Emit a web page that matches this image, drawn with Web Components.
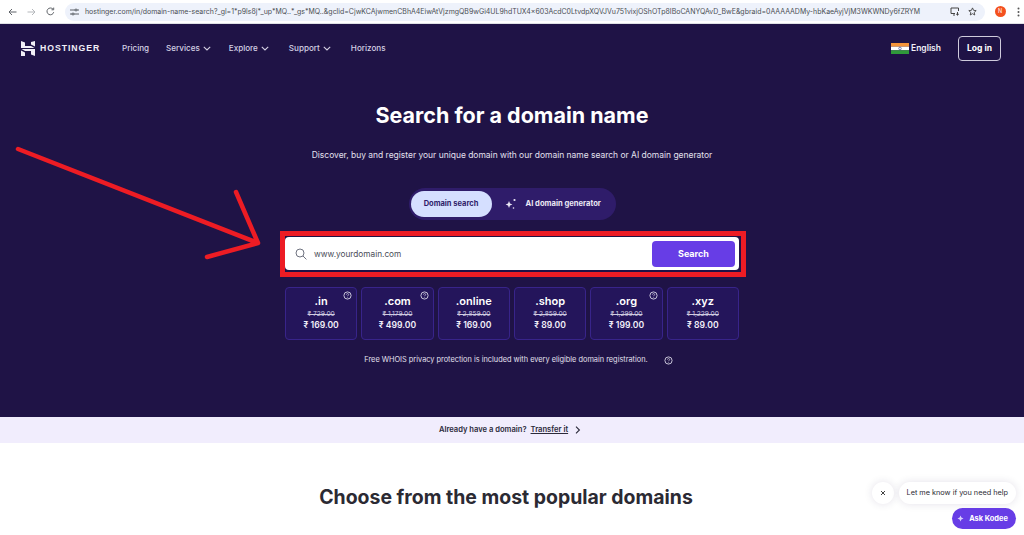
<!DOCTYPE html>
<html><head><meta charset="utf-8"><title>Hostinger</title>
<style>
html,body{margin:0;padding:0;background:#fff;height:535px;overflow:hidden;font-family:Inter,"Liberation Sans",sans-serif}
</style></head><body>
<browser-bar></browser-bar>
<site-hero>
  <site-nav></site-nav>
  <domain-finder></domain-finder>
</site-hero>
<transfer-strip></transfer-strip>
<popular-section></popular-section>
<chat-widget></chat-widget>
<red-arrow></red-arrow>
<script>
function def(name,html){customElements.define(name,class extends HTMLElement{constructor(){super();this.attachShadow({mode:'open'}).innerHTML=html;}});}
const help=(s=9,c='#d9d6e6')=>`<svg width="${s}" height="${s}" viewBox="0 0 10 10" fill="none" stroke="${c}" stroke-width="1"><circle cx="5" cy="5" r="4"/><path d="M3.8 4c0-1.5 2.5-1.5 2.5 0 0 .9-1.3.9-1.3 1.8" stroke-width=".8"/><circle cx="5" cy="7.4" r=".3" stroke-width=".5"/></svg>`;
const chev=`<svg width="8" height="5" viewBox="0 0 8 5" fill="none" stroke="#d5d1e4" stroke-width="1.1"><path d="M.8.8 4 3.9 7.2.8"/></svg>`;

def('browser-bar',`<style>
:host{display:flex;align-items:center;height:24px;background:#fff;box-sizing:border-box;border-bottom:1px solid #dfe1e5;padding-left:7px;color:#5f6368}
.ic{display:flex;width:10px;justify-content:center;margin-right:9px}
.omni{flex:none;width:920px;height:18px;margin:0 0 0 1px;background:#eef2fb;border-radius:9px;display:flex;align-items:center;box-sizing:border-box;padding:0 8px 0 5px}
.url{flex:1;white-space:nowrap;overflow:hidden;font:6.97px/17px Inter,"Liberation Sans",sans-serif;color:#4a4e53;margin-left:6px;width:0}
.av{width:11px;height:11px;border-radius:50%;background:#f4511e;color:#fff;font:5.5px/11px Inter,sans-serif;text-align:center;margin-left:9.5px}
.dots{margin-left:11.5px}
</style>
<span class="ic"><svg width="9" height="8" viewBox="0 0 9 8" fill="none" stroke="#5f6368" stroke-width="1"><path d="M8.5 4H1M4 1 1 4l3 3"/></svg></span>
<span class="ic"><svg width="9" height="8" viewBox="0 0 9 8" fill="none" stroke="#b4b7bb" stroke-width="1"><path d="M.5 4H8M5 1l3 3-3 3"/></svg></span>
<span class="ic"><svg width="9" height="9" viewBox="0 0 9 9" fill="none" stroke="#5f6368" stroke-width="1"><path d="M7.7 5.2A3.4 3.4 0 1 1 7 2.2"/><path d="M7.7.6v2.2H5.5" /></svg></span>
<div class="omni">
<svg width="9" height="8" viewBox="0 0 9 8" fill="none" stroke="#4a4f55" stroke-width=".9"><path d="M0 2h5M7 2h2M0 6h2M4 6h5"/><circle cx="6" cy="2" r="1"/><circle cx="3" cy="6" r="1"/></svg>
<span class="url">hostinger.com/in/domain-name-search?_gl=1*p9ls8j*_up*MQ..*_gs*MQ..&amp;gclid=CjwKCAjwmenCBhA4EiwAtVjzmgQB9wGi4UL9hdTUX4x603AcdC0LtvdpXQVJVu751vixjOShOTp8IBoCANYQAvD_BwE&amp;gbraid=0AAAAADMy-hbKaeAyjVjM3WKWNDy6fZRYM</span>
<svg width="10" height="9" viewBox="0 0 10 9" fill="none" stroke="#444" stroke-width="1"><path d="M8.5 4V1H1v5.5h4M3 8h2"/><path d="M7.5 5v3M6.2 7l1.3 1.2L8.8 7"/></svg>
<svg style="margin-left:8.5px" width="9" height="9" viewBox="0 0 10 10" fill="none" stroke="#444" stroke-width="1"><path d="m5 1 1.2 2.7 2.9.3-2.2 2 .6 2.9L5 7.4 2.5 8.9l.6-2.9-2.2-2 2.9-.3z"/></svg>
</div>
<span class="av">N</span>
<svg class="dots" width="3" height="10" viewBox="0 0 3 10" fill="#555"><circle cx="1.5" cy="1.5" r="1"/><circle cx="1.5" cy="5" r="1"/><circle cx="1.5" cy="8.5" r="1"/></svg>`);

def('site-hero',`<style>:host{display:block;height:393px;background:#1f1346;box-sizing:border-box}</style><slot></slot>`);

def('site-nav',`<style>
:host{display:flex;align-items:center;height:48px;box-sizing:border-box;padding:0 23px 0 21px;color:#d5d1e4;font:500 8.1px/12px Inter,"Liberation Sans",sans-serif}
.logo{display:flex;align-items:center;gap:5px;width:101px;color:#f1eff7;font:700 8.7px/12px "Liberation Sans",sans-serif;letter-spacing:.95px}
a{display:flex;align-items:center;gap:3px}
.links{display:flex;gap:19px}
.links a:nth-child(1){margin-right:-2px}
.links a:nth-child(2){margin-right:-1px}
.links a:nth-child(3),.links a:nth-child(4){margin-right:1px}
.sp{flex:1}
.lang{display:flex;align-items:center;gap:2px;color:#f1eff7;font-weight:600;font-size:8.5px;margin-right:17px}
.btn{width:43px;height:25px;box-sizing:border-box;border:1px solid #cfcbdc;border-radius:4px;display:flex;align-items:center;justify-content:center;color:#fff;font-weight:700;font-size:8.5px}
</style>
<div class="logo"><svg width="14" height="15" viewBox="0 0 14 15" fill="#f1eff7"><path d="M0 0 4 1.6V5H10L13.5 7H0zM10 1 14 0V5.6L10 3.6zM.5 8H14V15L10 13.4V10H4zM0 9.6 4 11.6V15H0z"/></svg>HOSTINGER</div>
<div class="links"><a>Pricing</a><a>Services ${chev}</a><a>Explore ${chev}</a><a>Support ${chev}</a><a>Horizons</a></div>
<span class="sp"></span>
<div class="lang"><svg width="18" height="11" viewBox="0 0 18 11"><rect width="18" height="3.7" fill="#f4943a"/><rect y="3.7" width="18" height="3.6" fill="#fff"/><rect y="7.3" width="18" height="3.7" fill="#2f9a3a"/><circle cx="9" cy="5.5" r="1.3" fill="none" stroke="#2a3a8c" stroke-width=".6"/></svg>English</div>
<div class="btn">Log in</div>`);

def('domain-finder',`<style>
:host{display:flex;flex-direction:column;align-items:center;font-family:Inter,"Liberation Sans",sans-serif;color:#fff;padding-top:29px}
h1{margin:0;font:700 21.5px/28px Inter,"Liberation Sans",sans-serif;height:28px}
p.s{margin:20px 0 0;font:400 8.46px/12px Inter,"Liberation Sans",sans-serif;color:#e3e0ee;height:12px}
.toggle{margin-top:27px;width:207px;height:32px;box-sizing:border-box;border-radius:16px;background:#2f1c6a;padding:3px 2px;display:flex;align-items:stretch}
.on{width:81px;border-radius:13px;background:#d5dfff;color:#2f1c6a;font:700 7.5px/26px Inter,sans-serif;text-align:center}
.off{display:flex;align-items:center;color:#ebe8f5;font:700 7.6px/26px Inter,sans-serif;padding-left:12px;gap:9px}
.box{margin-top:17px;width:454px;height:33px;box-sizing:border-box;background:#fff;border-radius:4px;display:flex;align-items:center;padding:0 4px 0 10px;color:#4a4d58;font:400 8.25px Inter,sans-serif;flex:none}
.box span{flex:1;margin-left:7px}
.go{width:83px;height:26px;border-radius:4px;background:#673de6;color:#fff;font:700 9px/26px Inter,sans-serif;text-align:center}
.cards{margin-top:17px;display:flex;gap:4px;width:454px}
.note{margin:14px 0 0 13px;display:flex;align-items:center;gap:16px;font:400 7.37px/12px Inter,sans-serif;color:#e3e0ee;height:12px}
</style>
<h1>Search for a domain name</h1>
<p class="s">Discover, buy and register your unique domain with our domain name search or AI domain generator</p>
<div class="toggle"><div class="on">Domain search</div><div class="off"><svg width="13" height="12" viewBox="0 0 13 12" fill="#ebe8f5"><path d="M5 3l1 2.4L8.4 6.4 6 7.4 5 10 4 7.4 1.6 6.4 4 5.4z"/><circle cx="10.5" cy="2" r="1.1"/><circle cx="9.5" cy="10" r=".8"/></svg>AI domain generator</div></div>
<div class="box"><svg width="12" height="12" viewBox="0 0 12 12" fill="none" stroke="#6f7380" stroke-width="1"><circle cx="5" cy="5" r="4"/><path d="M8 8l3.4 3.4"/></svg><span>www.yourdomain.com</span><div class="go">Search</div></div>
<div class="cards">
<tld-card name=".in" old="₹ 729.00" now="₹ 169.00" tip></tld-card>
<tld-card name=".com" old="₹ 1,179.00" now="₹ 499.00" tip></tld-card>
<tld-card name=".online" old="₹ 2,859.00" now="₹ 169.00"></tld-card>
<tld-card name=".shop" old="₹ 2,859.00" now="₹ 89.00"></tld-card>
<tld-card name=".org" old="₹ 1,299.00" now="₹ 199.00" tip></tld-card>
<tld-card name=".xyz" old="₹ 1,229.00" now="₹ 89.00"></tld-card>
</div>
<div class="note">Free WHOIS privacy protection is included with every eligible domain registration. ${help(9)}</div>`);

customElements.define('tld-card',class extends HTMLElement{constructor(){super();this.attachShadow({mode:'open'});}
connectedCallback(){const g=a=>this.getAttribute(a);this.shadowRoot.innerHTML=`<style>
:host{flex:1;height:53px;box-sizing:border-box;display:flex;flex-direction:column;align-items:center;background:#24155b;border:1px solid #38248a;border-radius:4px;position:relative;color:#fff;padding-top:6px}
.n{font:600 11px/14px Inter,sans-serif}
.o{font:400 6.6px/10px Inter,sans-serif;text-decoration:line-through;color:#d0cce0;margin-top:1px}
.p{font:600 8.6px/12px Inter,sans-serif;margin-top:0;color:#f3f1fa}
.t{position:absolute;top:3px;right:4px;display:flex}
</style><div class="n">${g('name')}</div><div class="o">${g('old')}</div><div class="p">${g('now')}</div>${this.hasAttribute('tip')?`<span class="t">${help(9)}</span>`:''}`;}});

def('transfer-strip',`<style>
:host{display:flex;align-items:center;justify-content:center;height:26px;box-sizing:border-box;padding-right:4px;background:#f1edfd;color:#2b2a3a;font:600 7.6px/12px Inter,sans-serif;gap:4px}
svg{margin-left:3px}
</style>Already have a domain? <u>Transfer it</u><svg width="6" height="8" viewBox="0 0 6 8" fill="none" stroke="#2b2a3a" stroke-width="1.1"><path d="M1 .7 4.4 4 1 7.3"/></svg>`);

def('popular-section',`<style>
:host{display:block;background:#fff;text-align:center;padding:42px 12px 0 0}
h2{margin:0;font:700 19.45px/24px Inter,"Liberation Sans",sans-serif;color:#2b2a33}
</style><h2>Choose from the most popular domains</h2>`);

def('chat-widget',`<style>
:host{position:absolute;right:8px;top:482px;display:flex;flex-direction:column;align-items:flex-end;gap:4px;font-family:Inter,sans-serif}
.r{display:flex;align-items:center;gap:5px}
.x{width:22px;height:22px;border-radius:50%;background:#fff;box-shadow:0 0 8px rgba(30,20,70,.12);display:flex;align-items:center;justify-content:center}
.b{height:22px;border-radius:11px;background:#fff;box-shadow:0 0 8px rgba(30,20,70,.12);font:400 7.3px/22px Inter,sans-serif;color:#2b2a33;padding:0 8px}
.k{height:21px;width:64px;box-sizing:border-box;padding-right:3px;border-radius:11px;background:#673de6;color:#fff;font:700 7.4px/21px Inter,sans-serif;display:flex;align-items:center;justify-content:center;gap:5px}
</style>
<div class="r"><span class="x"><svg width="6" height="6" viewBox="0 0 6 6" stroke="#444" stroke-width="1"><path d="M1 1l4 4M5 1 1 5"/></svg></span><span class="b">Let me know if you need help</span></div>
<div class="k"><svg width="7" height="7" viewBox="0 0 7 7" fill="#d9d0fb"><path d="M3.5.5 4.4 2.6 6.5 3.5 4.4 4.4 3.5 6.5 2.6 4.4.5 3.5 2.6 2.6z"/></svg>Ask Kodee</div>`);

def('red-arrow',`<style>
:host{position:absolute;left:0;top:0;width:1024px;height:535px;pointer-events:none;display:block}
svg{display:block}
</style><svg width="1024" height="535" viewBox="0 0 1024 535" fill="none">
<rect x="282.5" y="233.5" width="461" height="41" stroke="#ed1c24" stroke-width="5"/>
<path d="M18 149 258 243M236 192 258 243 207 257" stroke="#ed1c24" stroke-width="4.5" stroke-linecap="round" stroke-linejoin="round"/>
</svg>`);
</script>
</body></html>
